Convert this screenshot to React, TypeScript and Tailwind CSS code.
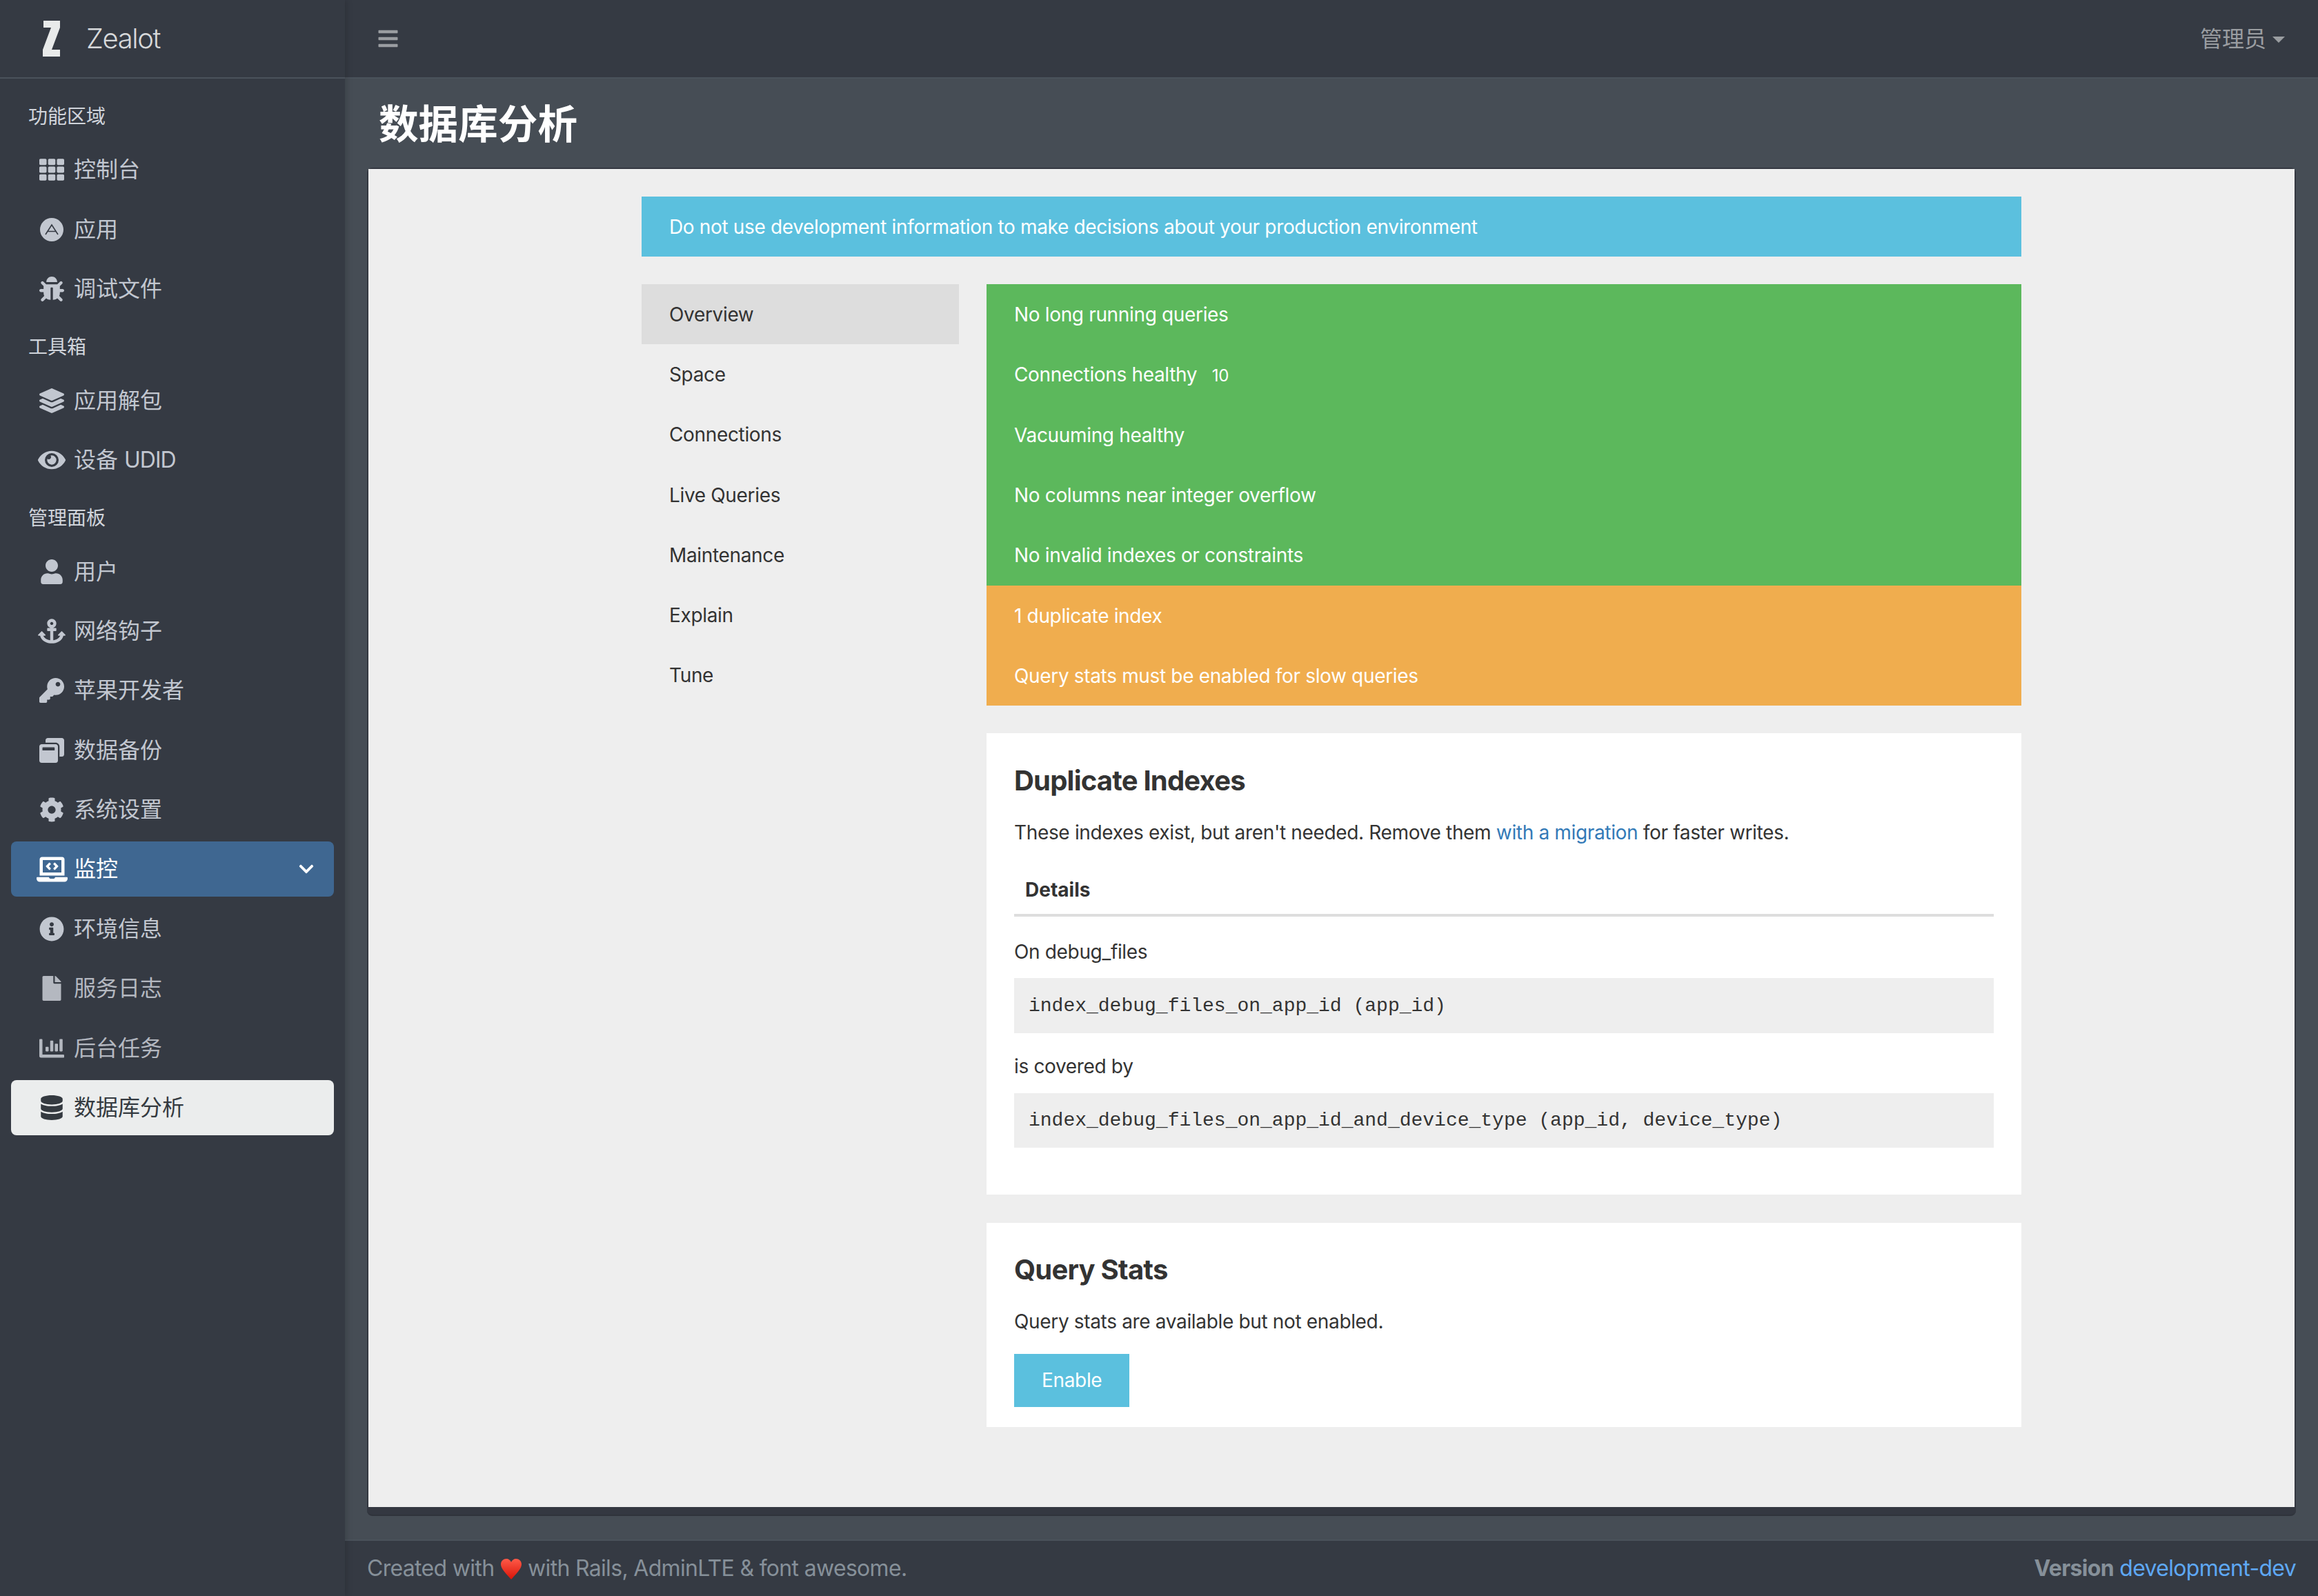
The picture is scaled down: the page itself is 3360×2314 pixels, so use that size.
import type { ReactNode } from "react";
import {
  FaAnchor,
  FaBars,
  FaBug,
  FaChartBar,
  FaChevronDown,
  FaCog,
  FaDatabase,
  FaEye,
  FaFile,
  FaInfoCircle,
  FaKey,
  FaLaptopCode,
  FaLayerGroup,
  FaTh,
  FaUser,
  FaWindowRestore,
} from "react-icons/fa";

const fontStack = "font-['Inter','Noto_Sans_CJK_SC',sans-serif]";

function ZealotLogo() {
  return (
    <svg viewBox="0 0 26 52" className="w-[26px] h-[52px]" fill="#e8eaea">
      <path d="M1 0H25V10L13 42H25V52H0V42L12 10H1Z" />
    </svg>
  );
}

function AppStoreIcon() {
  return (
    <svg viewBox="0 0 34 34" className="w-[34px] h-[34px]">
      <circle cx="17" cy="17" r="17" fill="currentColor" />
      <path d="M8 24L17 10L26 24M11 19.5H23" fill="none" stroke="#353a43" strokeWidth="1.6" />
    </svg>
  );
}

function Heart() {
  return (
    <svg viewBox="0 0 32 30" className="inline-block w-[32px] h-[30px] align-[-5px]">
      <defs>
        <linearGradient id="heart" x1="0" y1="0" x2="0" y2="1">
          <stop offset="0" stopColor="#ff5a48" />
          <stop offset="1" stopColor="#d81408" />
        </linearGradient>
      </defs>
      <path d="M16 30C7 20 1 14 1 8C1 3 5 0 9 0C12 0 15 2 16 5C17 2 20 0 23 0C27 0 31 3 31 8C31 14 25 20 16 30Z" fill="url(#heart)" />
    </svg>
  );
}

function NavHeader({ children }: { children: ReactNode }) {
  return <div className="h-[75.2px] flex items-center pl-[25px] text-[28px] text-[#d0d4db]">{children}</div>;
}

interface NavItemProps {
  icon: ReactNode;
  label: ReactNode;
  variant?: "default" | "open" | "active" | "dim";
}

function NavItem({ icon, label, variant = "default" }: NavItemProps) {
  let colors = "text-[#c2c7d0]";
  if (variant === "open") colors = "bg-[#3f6791] text-white";
  if (variant === "active") colors = "bg-[#ebeded] text-[#343a40]";
  if (variant === "dim") colors = "text-[#b4b8c0]";
  return (
    <div className={`h-[80px] mb-[6.4px] rounded-lg flex items-center pl-[32px] pr-[28px] text-[32px] ${colors}`}>
      <span className="w-[54px] mr-[5px] text-[36px] flex items-center justify-center">{icon}</span>
      <span className="flex-1">{label}</span>
      {variant === "open" && <FaChevronDown className="w-[24px] h-[24px]" />}
    </div>
  );
}

function Sidebar() {
  return (
    <aside className="w-[500px] shrink-0 bg-[#353a43] relative z-10 shadow-[3px_0_8px_rgba(0,0,0,0.14)]">
      <div className="h-[114px] border-b-2 border-[#4a525b] flex items-center pl-[62px]">
        <ZealotLogo />
        <span className="ml-[37px] text-[40px] font-light tracking-[-1.4px] text-[#d6d8da]">Zealot</span>
      </div>
      <nav className="mt-[17px] px-[16px]">
        <NavHeader>功能区域</NavHeader>
        <NavItem icon={<FaTh />} label="控制台" />
        <NavItem icon={<AppStoreIcon />} label="应用" />
        <NavItem icon={<FaBug />} label="调试文件" />
        <NavHeader>工具箱</NavHeader>
        <NavItem icon={<FaLayerGroup />} label="应用解包" />
        <NavItem
          icon={<FaEye className="w-[40px] h-[40px]" />}
          label={
            <>
              设备 <span className="tracking-[-1px]">UDID</span>
            </>
          }
        />
        <NavHeader>管理面板</NavHeader>
        <NavItem icon={<FaUser />} label="用户" />
        <NavItem icon={<FaAnchor className="w-[40px] h-[40px]" />} label="网络钩子" />
        <NavItem icon={<FaKey />} label="苹果开发者" />
        <NavItem icon={<FaWindowRestore />} label="数据备份" />
        <NavItem icon={<FaCog />} label="系统设置" />
        <NavItem icon={<FaLaptopCode className="w-[45px] h-[45px]" />} label="监控" variant="open" />
        <NavItem icon={<FaInfoCircle />} label="环境信息" />
        <NavItem icon={<FaFile />} label="服务日志" variant="dim" />
        <NavItem icon={<FaChartBar />} label="后台任务" variant="dim" />
        <NavItem icon={<FaDatabase />} label="数据库分析" variant="active" />
      </nav>
    </aside>
  );
}

const menu = ["Overview", "Space", "Connections", "Live Queries", "Maintenance", "Explain", "Tune"];

function StatusRow({ children, warn }: { children: ReactNode; warn?: boolean }) {
  return (
    <div className={`px-10 pt-[22.5px] pb-[21.5px] leading-[43.2px] text-white ${warn ? "bg-[#f0ad4e]" : "bg-[#5cb85c]"}`}>
      {children}
    </div>
  );
}

function CodeBox({ children }: { children: ReactNode }) {
  return (
    <div className="mt-[18px] h-[79.5px] flex items-center px-[21px] pt-[1px] bg-[#eeeeee] font-['Liberation_Mono',monospace] text-[28px] tracking-normal text-[#333]">
      {children}
    </div>
  );
}

function PgHero() {
  return (
    <div className="w-[2000px] mx-auto pt-10 text-[28px] leading-[42px] tracking-[-0.34px] text-[#333]">
      <div className="h-[87px] bg-[#5bc0de] text-white px-10 flex items-center">
        Do not use development information to make decisions about your production environment
      </div>
      <div className="flex mt-10">
        <ul className="w-[460px] shrink-0">
          {menu.map((item, i) => (
            <li key={item} className={`h-[87.2px] flex items-center px-10 pt-[1px] ${i === 0 ? "bg-[#dddddd]" : ""}`}>
              {item}
            </li>
          ))}
        </ul>
        <div className="ml-10 w-[1500px]">
          <StatusRow>No long running queries</StatusRow>
          <StatusRow>
            Connections healthy <span className="ml-[14px] text-[24px]">10</span>
          </StatusRow>
          <StatusRow>Vacuuming healthy</StatusRow>
          <StatusRow>No columns near integer overflow</StatusRow>
          <StatusRow>No invalid indexes or constraints</StatusRow>
          <StatusRow warn>1 duplicate index</StatusRow>
          <StatusRow warn>Query stats must be enabled for slow queries</StatusRow>

          <section className="mt-[40px] bg-white px-10 pt-[45px] pb-[67.5px]">
            <h2 className="text-[40px] leading-[48px] font-bold tracking-[-0.8px]">Duplicate Indexes</h2>
            <p className="mt-[30px]">
              These indexes exist, but aren't needed. Remove them <a className="text-[#337ab7]">with a migration</a> for
              faster writes.
            </p>
            <div className="mt-[41px] pl-4 pb-[14px] border-b-4 border-[#dddddd] font-bold tracking-normal">Details</div>
            <p className="mt-[30px]">On debug_files</p>
            <div className="-mt-px">
              <CodeBox>index_debug_files_on_app_id (app_id)</CodeBox>
            </div>
            <p className="mt-[27px]">is covered by</p>
            <CodeBox>index_debug_files_on_app_id_and_device_type (app_id, device_type)</CodeBox>
          </section>

          <section className="mt-[41px] bg-white px-10 pt-[44px] pb-[29px]">
            <h2 className="text-[40px] leading-[48px] font-bold tracking-[-0.8px]">Query Stats</h2>
            <p className="mt-[30px]">Query stats are available but not enabled.</p>
            <button type="button" className="mt-[26px] h-[77px] px-10 bg-[#5bc0de] text-white">
              Enable
            </button>
          </section>
        </div>
      </div>
    </div>
  );
}

export default function App() {
  return (
    <div className={`flex w-[3360px] h-[2314px] overflow-hidden bg-[#353a43] ${fontStack}`}>
      <Sidebar />
      <div className="flex-1 min-w-0 flex flex-col bg-[#464d55]">
        <header className="h-[114px] shrink-0 bg-[#353a43] border-b-2 border-[#4a525b] flex items-center justify-between pl-[48px] pr-[48px]">
          <FaBars className="w-[29px] h-[32px] text-[#9a9da1]" />
          <div className="flex items-center pt-[2px] text-[32px] text-[#9a9da1]">
            管理员
            <span className="ml-[9px] w-0 h-0 border-x-[9px] border-x-transparent border-t-[9px] border-t-[#9a9da1]" />
          </div>
        </header>
        <div className="h-[129px] shrink-0 flex items-center pl-[49px] pt-[3px]">
          <h1 className="text-[57.6px] font-bold text-white">数据库分析</h1>
        </div>
        <div className="flex-1 min-h-0 mx-[32px] mb-[34px] px-[2px] pt-[2px] pb-[11px] rounded-lg bg-[#343841] border-b-2 border-[#2f333b]">
          <div className="h-full bg-[#eeeeee] overflow-hidden">
            <PgHero />
          </div>
        </div>
        <footer className="h-[82px] shrink-0 bg-[#353a43] border-t-2 border-[#4a525b] flex items-center justify-between pl-[32px] pr-[32px] text-[32px] tracking-[-0.68px] text-[#869099]">
          <span>
            Created with <Heart /> with Rails, AdminLTE &amp; font awesome.
          </span>
          <span>
            <b className="font-bold">Version</b> <a className="text-[#5ea8f5]">development-dev</a>
          </span>
        </footer>
      </div>
    </div>
  );
}
